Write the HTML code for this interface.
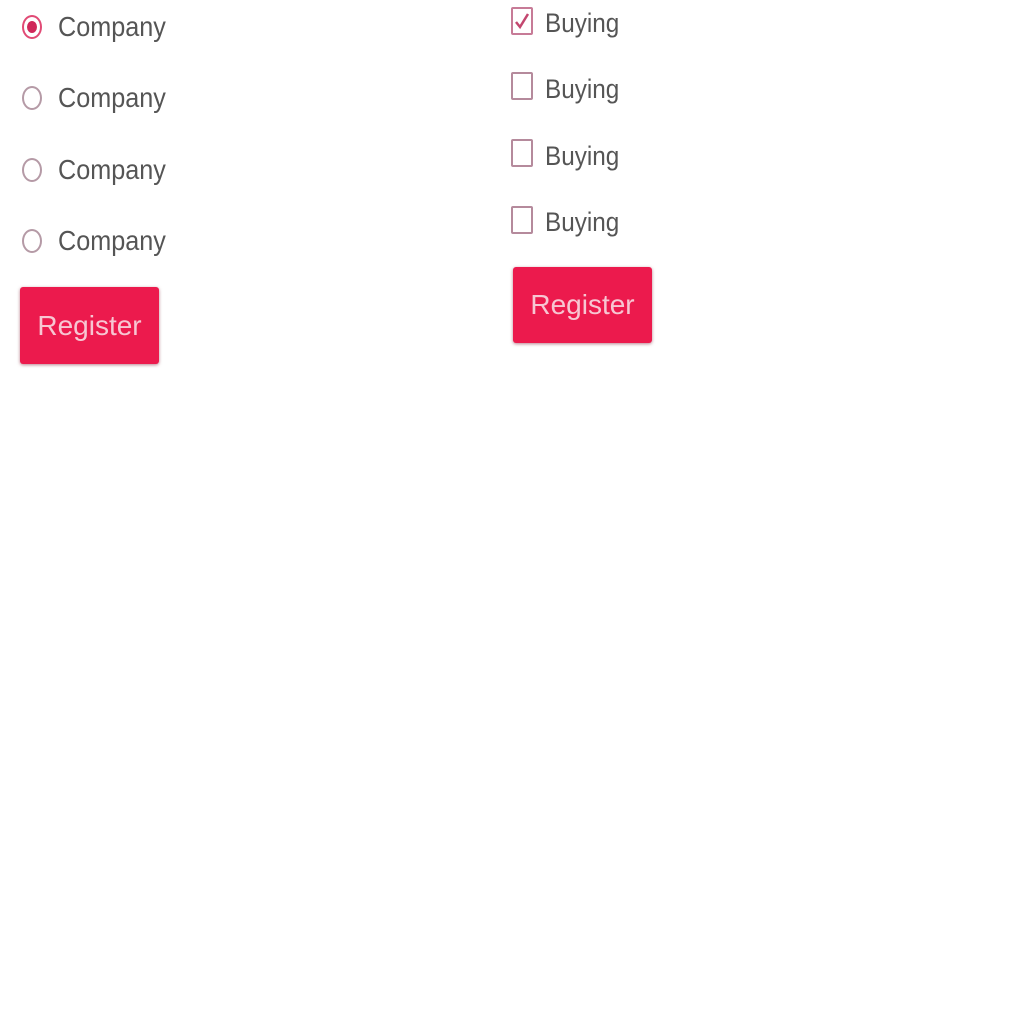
<!DOCTYPE html>
<html><head><style>
body{margin:0;width:1024px;height:1024px;background:#fff;position:relative;font-family:"Liberation Sans",sans-serif;overflow:hidden}
.t{position:absolute;color:#555;font-size:28px;line-height:30px;transform:scaleX(0.9);transform-origin:left}
.r{position:absolute;width:20px;height:24px;border:2px solid #b59aa6;border-radius:50%;box-sizing:border-box}
.c{position:absolute;width:22px;height:28px;border:2px solid #b58a9c;border-radius:2px;box-sizing:border-box}
.b{position:absolute;background:#ec1a4d;color:#f7c6d2;font-size:28px;text-align:center;border-radius:3px;box-shadow:0 1px 3px rgba(120,0,30,.5)}
</style></head><body>
<div class="r" style="left:22px;top:15px;border-color:#e14a75;"><div style="position:absolute;left:3px;top:4px;width:10px;height:12px;border-radius:50%;background:#d0285a"></div></div>
<div class="t" style="left:58px;top:12px">Company</div>
<div class="r" style="left:22px;top:86px"></div>
<div class="t" style="left:58px;top:83px">Company</div>
<div class="r" style="left:22px;top:158px"></div>
<div class="t" style="left:58px;top:155px">Company</div>
<div class="r" style="left:22px;top:229px"></div>
<div class="t" style="left:58px;top:226px">Company</div>
<div class="b" style="left:20px;top:287px;width:139px;height:77px;line-height:77px">Register</div>

<div class="c" style="left:511px;top:7px;border-color:#c77b97"><svg width="18" height="24" style="position:absolute;left:0;top:0"><path d="M3 13 L7 18 L15 5" stroke="#c3476f" stroke-width="2.5" fill="none"/></svg></div>
<div class="t" style="left:545px;top:8px;font-size:27px">Buying</div>
<div class="c" style="left:511px;top:72px"></div>
<div class="t" style="left:545px;top:74px;font-size:27px">Buying</div>
<div class="c" style="left:511px;top:139px"></div>
<div class="t" style="left:545px;top:141px;font-size:27px">Buying</div>
<div class="c" style="left:511px;top:206px"></div>
<div class="t" style="left:545px;top:207px;font-size:27px">Buying</div>
<div class="b" style="left:513px;top:267px;width:139px;height:76px;line-height:76px">Register</div>
</body></html>
